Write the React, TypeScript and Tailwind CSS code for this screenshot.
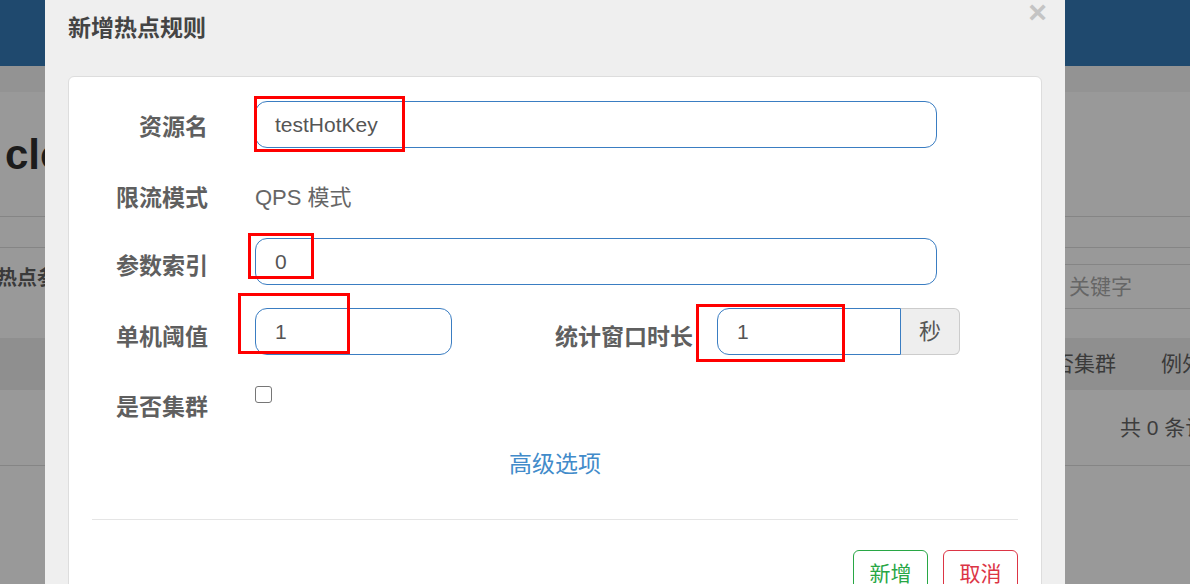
const font = { fontFamily: '"Liberation Sans", "Noto Sans CJK SC", sans-serif' }

const Field = ({ value, className }: { value: string; className: string }) => (
    <div className={`h-[47px] border border-[#3a7dc2] flex items-center px-[19px] text-[21px] text-[#555] bg-white ${className}`}>
        {value}
    </div>
)

const Label = ({ text, className = "" }: { text: string; className?: string }) => (
    <div className={`w-[139px] shrink-0 text-right font-bold text-[23px] leading-[28px] text-[#5f5f5f] ${className}`}>
        {text}
    </div>
)

const App = () => {
    return (
        <div className="relative w-[1190px] h-[584px] overflow-hidden bg-[#999999]" style={font}>
            {/* page behind the dialog */}
            <div className="h-[66px] bg-[#1f496e]" />
            <div className="h-[26px] bg-[#939393]" />
            <div className="h-[124px] pl-[5px] flex items-center">
                <div className="w-[50px] overflow-hidden text-[42px] font-bold text-[#1c1c1c] whitespace-nowrap">cloud</div>
            </div>
            <div className="h-[31px] border-t border-[#858585]" />
            <div className="h-[91px] border-t border-[#858585] flex justify-between">
                <div className="pt-[16px] -ml-[3px] font-bold text-[20px] leading-[28px] text-[#3a3a3a] whitespace-nowrap">
                    热点参数规则
                </div>
                <div className="mt-[16px] w-[134px] h-[45px] border-y border-l border-[#858585] pl-[12px] flex items-center text-[21px] text-[#666] whitespace-nowrap">
                    关键字
                </div>
            </div>
            <div className="h-[52px] bg-[#8f8f8f] flex items-center gap-[45px] pl-[1032px] text-[21px] text-[#3a3a3a] whitespace-nowrap">
                <span>是否集群</span>
                <span>例外项</span>
            </div>
            <div className="h-[76px] border-b border-[#858585] flex items-center pl-[1120px] text-[21px] text-[#3d3d3d] whitespace-nowrap">
                共 0 条记录
            </div>

            {/* dialog */}
            <div className="absolute left-[45px] top-0 w-[1020px] h-[600px] bg-[#efefef]">
                <div className="h-[76px] px-[23px] pt-[14px] relative">
                    <h3 className="text-[23px] leading-[28px] font-bold text-[#444]">新增热点规则</h3>
                    <span className="absolute right-[18px] -top-[8px] text-[32px] font-bold text-[#c4c4c4] leading-[40px]">×</span>
                </div>
                <div className="mx-[23px] w-[974px] bg-white border border-[#dddddd] rounded-[6px] pt-[24px] pb-[40px]">
                    <div className="flex items-start h-[47px]">
                        <Label text="资源名" className="pt-[12px]" />
                        <Field value="testHotKey" className="ml-[47px] w-[682px] rounded-[12px]" />
                    </div>
                    <div className="flex items-start h-[47px] mt-[23px]">
                        <Label text="限流模式" className="pt-[13px]" />
                        <div className="ml-[47px] pt-[13px] text-[22px] leading-[28px] text-[#666]">QPS 模式</div>
                    </div>
                    <div className="flex items-start h-[47px] mt-[20px]">
                        <Label text="参数索引" className="pt-[14px]" />
                        <Field value="0" className="ml-[47px] w-[682px] rounded-[12px]" />
                    </div>
                    <div className="flex items-start h-[47px] mt-[23px]">
                        <Label text="单机阈值" className="pt-[15px]" />
                        <Field value="1" className="ml-[47px] w-[197px] rounded-[12px]" />
                        <div className="w-[241px] shrink-0 text-right font-bold text-[23px] leading-[28px] text-[#5f5f5f] pt-[15px]">
                            统计窗口时长
                        </div>
                        <div className="ml-[24px] flex">
                            <Field value="1" className="w-[184px] rounded-l-[12px]" />
                            <div className="w-[59px] h-[47px] border border-l-0 border-[#cccccc] bg-[#eeeeee] rounded-r-[6px] flex items-center justify-center text-[22px] text-[#555]">
                                秒
                            </div>
                        </div>
                    </div>
                    <div className="flex items-start mt-[23px]">
                        <Label text="是否集群" className="pt-[15px]" />
                        <div className="ml-[47px] mt-[8px] w-[17px] h-[17px] border-[1.5px] border-[#767676] rounded-[3px] bg-white" />
                    </div>
                    <div className="mt-[29px] text-center text-[23px] leading-[28px] text-[#428bca]">高级选项</div>
                    <div className="mx-[23px] mt-[41px] border-t border-[#e5e5e5]" />
                    <div className="mt-[30px] pr-[23px] flex justify-end gap-[15px]">
                        <button className="w-[75px] h-[47px] border border-[#28a745] rounded-[6px] text-[21px] text-[#28a745] bg-white">新增</button>
                        <button className="w-[75px] h-[47px] border border-[#dc3545] rounded-[6px] text-[21px] text-[#dc3545] bg-white">取消</button>
                    </div>
                </div>
            </div>

            {/* red annotation boxes */}
            <div className="absolute left-[254px] top-[96px] w-[151px] h-[56px] border-[3px] border-[#ff0000]" />
            <div className="absolute left-[248px] top-[233px] w-[66px] h-[46px] border-[3px] border-[#ff0000]" />
            <div className="absolute left-[238px] top-[293px] w-[112px] h-[61px] border-[3px] border-[#ff0000]" />
            <div className="absolute left-[696px] top-[304px] w-[149px] h-[58px] border-[3px] border-[#ff0000]" />
        </div>
    )
}

export default App
